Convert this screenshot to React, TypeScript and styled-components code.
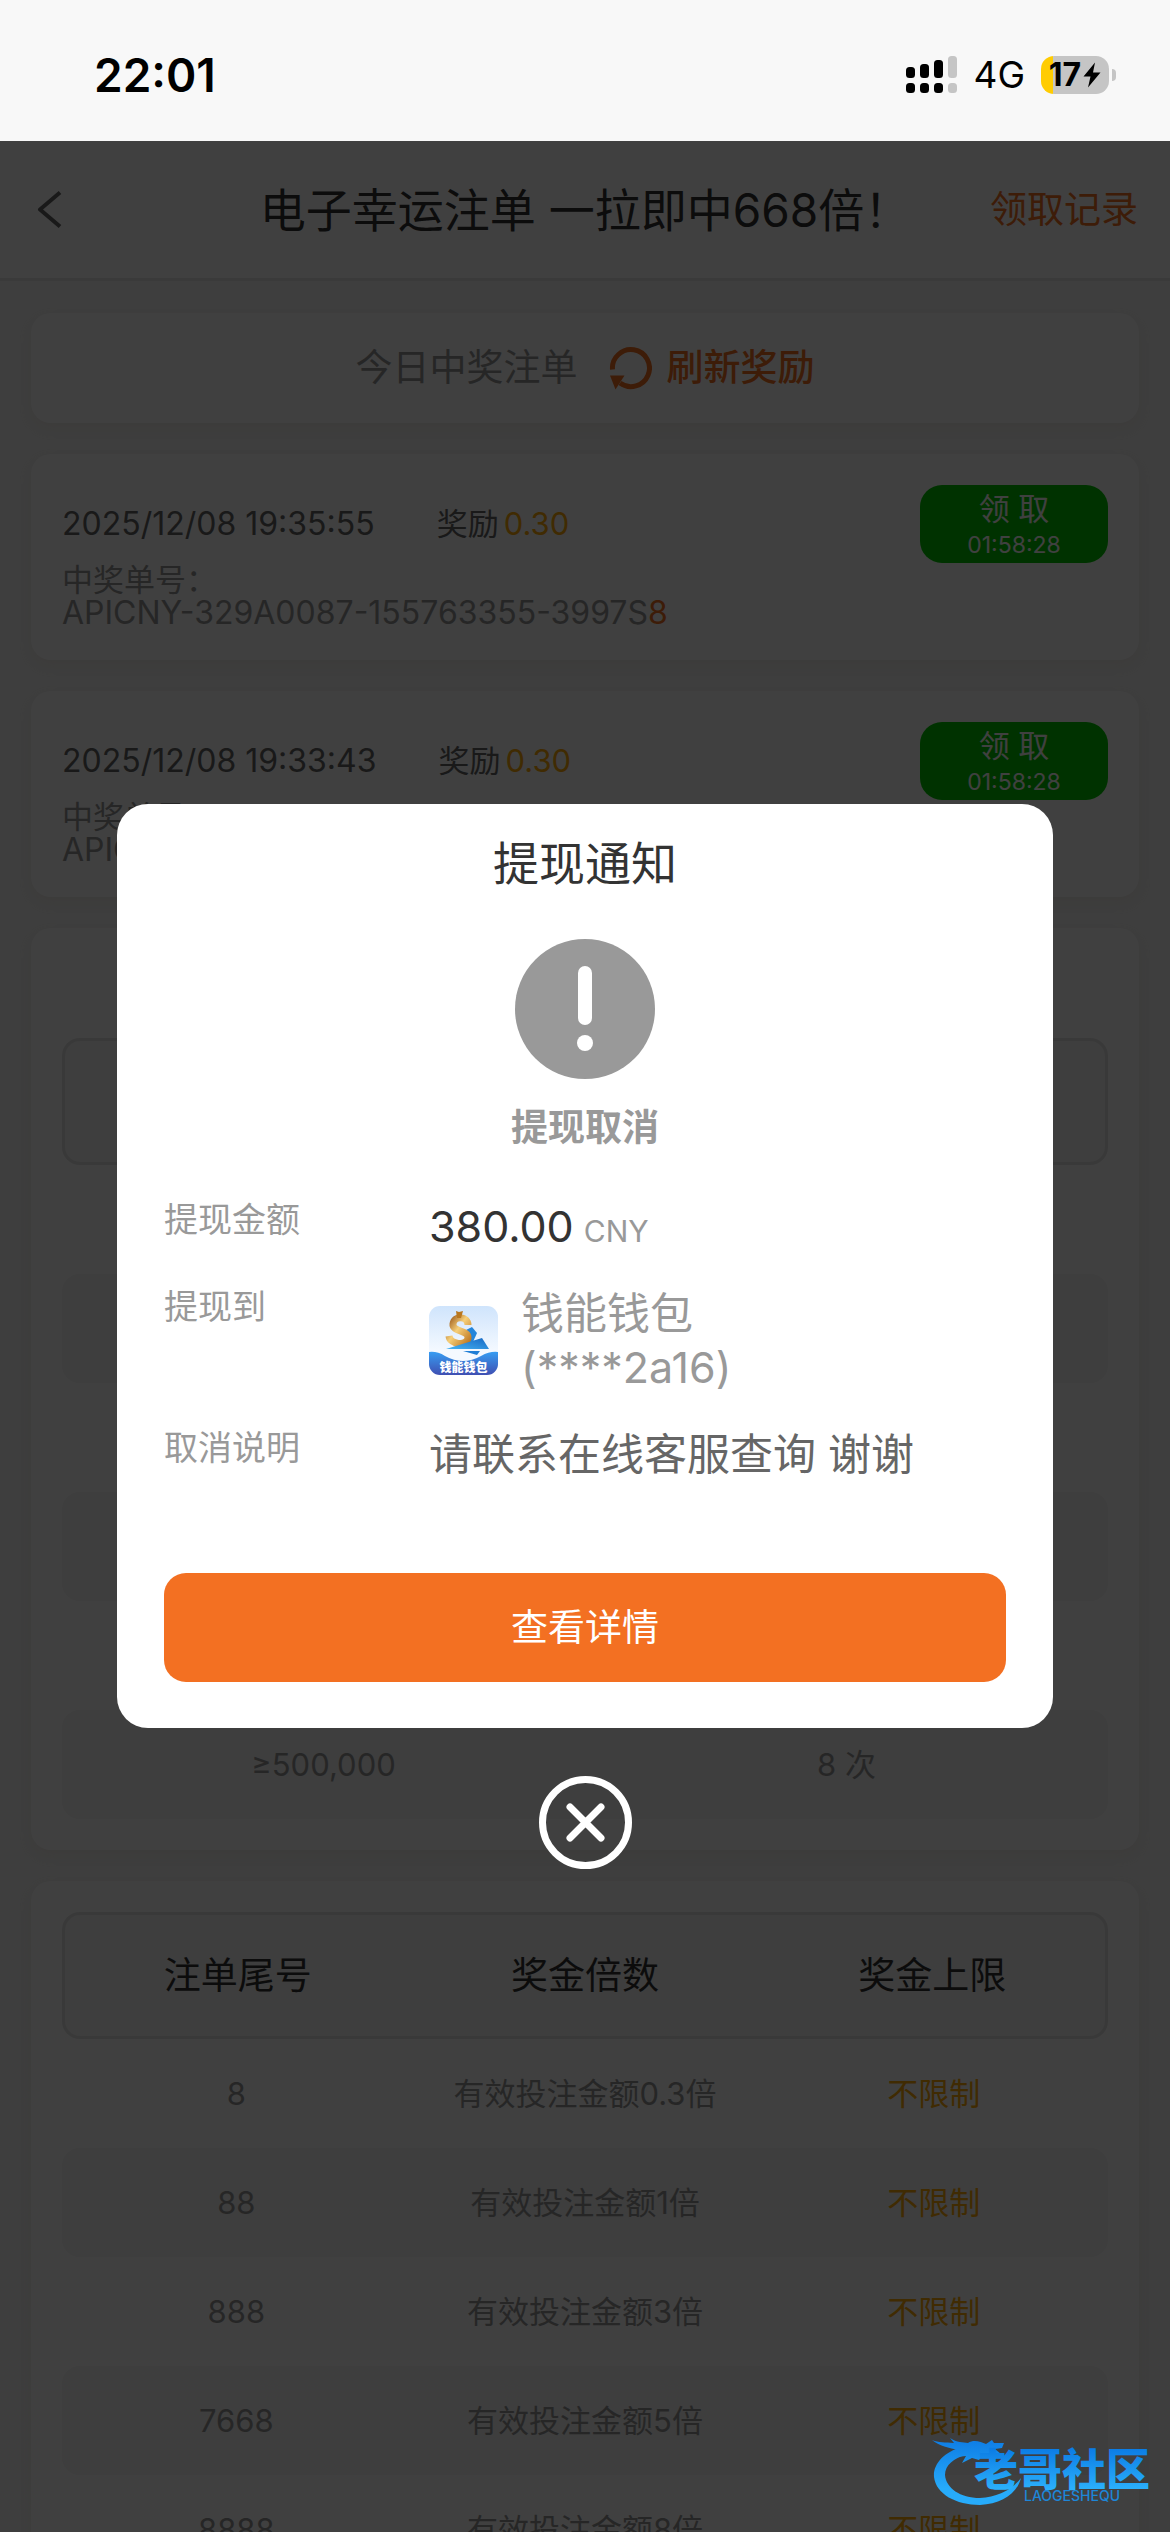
import React from "react";
import styled, { createGlobalStyle } from "styled-components";

const GlobalStyle = createGlobalStyle`
  *, *::before, *::after { box-sizing: border-box; }
  body {
    margin: 0;
    overflow: hidden;
    background: #f5f5f5;
    color: #333;
    font-family: Inter, "Noto Sans CJK SC", sans-serif;
  }
  button {
    margin: 0;
    padding: 0;
    border: 0;
    background: none;
    font: inherit;
    color: inherit;
    cursor: pointer;
  }
  svg { display: block; flex: none; }
`;

const Screen = styled.div`
  display: flex;
  flex-direction: column;
  height: 100vh;
  overflow: hidden;
`;

const StatusBar = styled.div`
  flex: none;
  display: flex;
  align-items: center;
  justify-content: space-between;
  height: 141px;
  padding: 8px 54px 0 94px;
  background: #f8f8f8;
  color: #000;
`;

const Clock = styled.time`
  font-size: 46px;
  line-height: 56px;
  font-weight: 600;
`;

const StatusIcons = styled.div`
  display: flex;
  align-items: center;
  gap: 16px;
`;

const Network = styled.span`
  font-size: 37px;
  line-height: 44px;
`;

const Battery = styled.div`
  display: flex;
  align-items: center;
  gap: 3px;
`;

const BatteryBody = styled.div`
  display: flex;
  align-items: center;
  justify-content: center;
  gap: 2px;
  width: 68px;
  height: 38px;
  border-radius: 13px;
  background: linear-gradient(90deg, #ffcc02 12px, #c5c5c5 12px);
  font-size: 32px;
  line-height: 38px;
  font-weight: 700;
`;

const BatteryTip = styled.div`
  width: 4px;
  height: 12px;
  border-radius: 0 6px 6px 0;
  background: #c5c5c5;
`;

const WebView = styled.div`
  flex: 1;
  min-height: 0;
  position: relative;
  overflow: hidden;
`;

const NavBar = styled.header`
  display: grid;
  grid-template-columns: 1fr auto 1fr;
  align-items: center;
  height: 140px;
  padding: 0 32px;
  border-bottom: 3px solid #e6e6e6;
  background: #fff;
`;

const PageTitle = styled.h1`
  margin: 0;
  font-size: 46px;
  line-height: 64px;
  font-weight: 400;
`;

const BackButton = styled.button`
  justify-self: start;
  padding: 0 5px;
`;

const HistoryLink = styled.a`
  justify-self: end;
  color: #f37022;
  font-size: 37px;
  line-height: 54px;
  text-decoration: none;
`;

const Content = styled.main`
  display: flex;
  flex-direction: column;
  gap: 31px;
  padding: 32px 31px;
`;

const Card = styled.section`
  padding: 31px;
  border-radius: 20px;
  background: #fff;
  box-shadow: 0 6px 12px rgba(214, 206, 176, 0.18);
`;

const TodayCard = styled(Card)`
  display: flex;
  align-items: center;
  justify-content: center;
  gap: 31px;
  height: 110px;
  font-size: 37px;
  line-height: 54px;
`;

const TodayLabel = styled.span`
  color: #999;
`;

const RefreshButton = styled.button`
  display: flex;
  align-items: center;
  gap: 15px;
  color: #f37022;
  font-weight: 500;
`;

const TierCard = styled(Card)`
  padding-top: 110px;
`;

const RecordTop = styled.div`
  display: flex;
  align-items: center;
  justify-content: space-between;
  color: #666;
  font-size: 31px;
  line-height: 44px;
`;

const RecordInfo = styled.div`
  display: flex;
  gap: 62px;
`;

const RecordTime = styled.time`
  font-size: 32px;
`;

const Reward = styled.span`
  display: flex;
  gap: 5px;
`;

const Amber = styled.span`
  color: #ffaa09;
`;

const ClaimButton = styled.button`
  display: flex;
  flex-direction: column;
  align-items: center;
  width: 188px;
  height: 78px;
  padding-top: 6px;
  border-radius: 22px;
  background: #00c800;
  color: #fff;
  font-size: 31px;
  line-height: 36px;
`;

const Countdown = styled.span`
  font-size: 23px;
`;

const TicketLabel = styled.div`
  color: #999;
  font-size: 31px;
  line-height: 33px;
`;

const TicketNumber = styled(TicketLabel)`
  font-size: 32px;
`;

const LuckyDigit = styled.span`
  color: #f37022;
`;

const Table = styled.table`
  width: 100%;
  table-layout: fixed;
  border-collapse: separate;
  border-spacing: 0;
  text-align: center;
`;

const HeadCell = styled.th`
  height: 127px;
  padding: 0;
  border: solid #e2e2e2;
  border-width: 3px 0;
  background: #f5f5f5;
  font-size: 37px;
  line-height: 54px;
  font-weight: 400;
  &:first-child {
    border-left-width: 3px;
    border-radius: 18px 0 0 18px;
  }
  &:last-child {
    border-right-width: 3px;
    border-radius: 0 18px 18px 0;
  }
`;

const BodyRow = styled.tr`
  &:nth-child(even) td {
    background: #f5f5f5;
  }
`;

const Cell = styled.td<{ $amber?: boolean }>`
  height: 109px;
  padding: 0;
  color: ${(p) => (p.$amber ? "#ffaa09" : "#999")};
  font-size: 31px;
  line-height: 44px;
  &:first-child { border-radius: 18px 0 0 18px; }
  &:last-child { border-radius: 0 18px 18px 0; }
`;

const Overlay = styled.div`
  position: absolute;
  inset: 0;
  display: flex;
  flex-direction: column;
  align-items: center;
  justify-content: center;
  gap: 48px;
  background: rgba(0, 0, 0, 0.75);
`;

const Dialog = styled.div`
  display: flex;
  flex-direction: column;
  align-items: center;
  width: 80%;
  padding: 27px 47px 46px;
  border-radius: 31px;
  background: #fff;
`;

const DialogTitle = styled.h2`
  margin: 0 0 44px;
  font-size: 46px;
  line-height: 64px;
  font-weight: 400;
`;

const StatusText = styled.p`
  margin: 22px 0 38px;
  color: #999;
  font-size: 37px;
  line-height: 54px;
  font-weight: 700;
`;

const Details = styled.dl`
  display: flex;
  flex-direction: column;
  gap: 21px;
  width: 100%;
  margin: 0 0 86px;
`;

const DetailRow = styled.div`
  display: grid;
  grid-template-columns: 265px 1fr;
`;

const DetailLabel = styled.dt`
  color: #999;
  font-size: 34px;
  line-height: 54px;
`;

const DetailValue = styled.dd<{ $color: string }>`
  display: flex;
  align-items: center;
  margin: 0;
  padding: 6px 0;
  color: ${(p) => p.$color};
  font-size: 43px;
  line-height: 54px;
`;

const AmountValue = styled(DetailValue)`
  align-items: baseline;
  gap: 10px;
`;

const Currency = styled.span`
  color: #999;
  font-size: 30px;
  line-height: 36px;
`;

const WalletValue = styled(DetailValue)`
  gap: 23px;
`;

const DetailsButton = styled.button`
  width: 100%;
  height: 109px;
  border-radius: 22px;
  background: #f37022;
  color: #fff;
  font-size: 37px;
  line-height: 54px;
`;

const Watermark = styled.div`
  position: absolute;
  right: 12px;
  bottom: 20px;
`;

const SignalIcon = () => (
  <svg width="51" height="37" viewBox="0 0 51 37" aria-hidden="true">
    {[11, 8, 4, 0].map((top, i) => (
      <g key={top} fill={i < 3 ? "#000" : "#c5c5c5"}>
        <rect x={i * 14} y={top} width="9" height={22 - top} rx="3.5" />
        <rect x={i * 14} y="27" width="9" height="10" rx="3.5" />
      </g>
    ))}
  </svg>
);

const BoltIcon = () => (
  <svg width="18" height="26" viewBox="0 0 18 26" aria-hidden="true">
    <path d="M12 0.5 L0.5 14.5 H7.5 L5 25.5 L17.5 10.5 H10 Z" fill="#000" />
  </svg>
);

const BackIcon = () => (
  <svg width="25" height="37" viewBox="0 0 25 37" aria-hidden="true">
    <path d="M23 1.5 L3 18.5 L23 35.5" fill="none" stroke="#666" strokeWidth="4" strokeLinejoin="round" />
  </svg>
);

const RefreshIcon = () => (
  <svg width="43" height="44" viewBox="0 0 43 44" aria-hidden="true">
    <path d="M3.5 23.5 A18.5 18.5 0 1 1 11 37" fill="none" stroke="#f37022" strokeWidth="5" />
    <path d="M1 29.5 H15.5 L6.5 43.5 Z" fill="#f37022" />
  </svg>
);

const AlertIcon = () => (
  <svg width="140" height="140" viewBox="0 0 140 140" aria-hidden="true">
    <circle cx="70" cy="70" r="70" fill="#999" />
    <rect x="63" y="27" width="14" height="59" rx="7" fill="#fff" />
    <circle cx="70" cy="104" r="8" fill="#fff" />
  </svg>
);

const WalletLogo = () => (
  <svg width="69" height="69" viewBox="0 0 69 69" aria-hidden="true">
    <defs>
      <linearGradient id="walletSky" x1="0" y1="0" x2="0" y2="1">
        <stop offset="0" stopColor="#cfe4fc" />
        <stop offset="0.65" stopColor="#f4f9ff" />
      </linearGradient>
      <linearGradient id="walletBase" x1="0" y1="0" x2="0" y2="1">
        <stop offset="0" stopColor="#379df2" />
        <stop offset="1" stopColor="#3f4fb2" />
      </linearGradient>
      <linearGradient id="walletGold" x1="0" y1="0" x2="1" y2="1">
        <stop offset="0" stopColor="#9c5a1c" />
        <stop offset="0.45" stopColor="#f6cf79" />
        <stop offset="1" stopColor="#c07a24" />
      </linearGradient>
      <linearGradient id="walletPlane" x1="0" y1="1" x2="1" y2="0">
        <stop offset="0" stopColor="#45b4f3" />
        <stop offset="1" stopColor="#1768c4" />
      </linearGradient>
      <clipPath id="walletClip">
        <rect width="69" height="69" rx="11" />
      </clipPath>
    </defs>
    <g clipPath="url(#walletClip)">
      <rect width="69" height="69" fill="url(#walletSky)" />
      <path d="M37 24 L43 21 L48 27 L44 36 L36 37 Z" fill="#2385da" />
      <path
        d="M39 19 C39 10 25 9 24 18 C23 26 40 24 39 32 C38 40 21 39 20 30"
        fill="none"
        stroke="url(#walletGold)"
        strokeWidth="7"
      />
      <path d="M27 5 L30 6 L34 5 L32 12 H28 Z" fill="#b9771f" />
      <path d="M17 43 L53 32 L60 43 Z" fill="url(#walletPlane)" />
      <path d="M34 45 H51 L48 49 Z" fill="#1f7ed6" />
      <path d="M0 46 Q8 45 16 50 Q34 60 52 50 Q61 45 69 46 V69 H0 Z" fill="url(#walletBase)" />
      <text
        x="34.5"
        y="66"
        textAnchor="middle"
        fontFamily="Noto Sans CJK SC, sans-serif"
        fontSize="12"
        fontWeight="900"
        fill="#fff"
      >
        钱能钱包
      </text>
    </g>
  </svg>
);

const CloseIcon = () => (
  <svg width="93" height="93" viewBox="0 0 93 93" aria-hidden="true">
    <g fill="none" stroke="#fff" strokeWidth="7" strokeLinecap="round">
      <circle cx="46.5" cy="46.5" r="43" />
      <path d="M31 31 L62 62 M62 31 L31 62" />
    </g>
  </svg>
);

const CommunityLogo = () => (
  <svg width="226" height="78" viewBox="0 0 226 78" role="img" aria-label="老哥社区">
    <defs>
      <linearGradient id="brandBlue" x1="0" y1="0" x2="0" y2="78" gradientUnits="userSpaceOnUse">
        <stop offset="0.1" stopColor="#0f7fe6" />
        <stop offset="0.7" stopColor="#27abfa" />
      </linearGradient>
      <linearGradient id="brandText" x1="0" y1="0" x2="0" y2="1">
        <stop offset="0.2" stopColor="#0b7be4" />
        <stop offset="0.85" stopColor="#2bb0fb" />
      </linearGradient>
    </defs>
    <g fill="url(#brandBlue)">
      <path d="M30 13 C12 18 1 30 2 43 C4 60 24 71 48 71 C69 70 85 60 89 44 C79 57 65 63 48 64 C28 64 14 54 13 41 C13 31 22 24 34 21 Z" />
      <path d="M0 6 C7 9 13 8 22 9 L18 4 C25 9 31 8 36 9 C42 5 49 8 54 10 L60 6 L62 9 L72 9 L70 14 L63 15 L69 20 L66 24 L58 20 L60 24 L50 22 L47 26 L40 24 L30 29 L34 22 L24 23 L27 16 C17 14 7 12 0 6 Z" />
    </g>
    <text
      x="130"
      y="52"
      textAnchor="middle"
      fontFamily="Noto Sans CJK SC, sans-serif"
      fontSize="44"
      fontWeight="900"
      fill="url(#brandText)"
    >
      老哥社区
    </text>
    <text x="92" y="67" fontFamily="Inter, sans-serif" fontSize="14" fontWeight="500" fill="#1d86d8">
      LAOGESHEQU
    </text>
  </svg>
);

const records = [
  { time: "2025/12/08 19:35:55", reward: "0.30", ticket: "APICNY-329A0087-155763355-3997S", digit: "8", left: "01:58:28" },
  { time: "2025/12/08 19:33:43", reward: "0.30", ticket: "APICNY-329A0087-155763355-3997S", digit: "8", left: "01:58:28" },
];

const tiers = [
  ["", ""],
  ["", ""],
  ["", ""],
  ["", ""],
  ["", ""],
  ["≥500,000", "8 次"],
];

const prizes = [
  ["8", "有效投注金额0.3倍", "不限制"],
  ["88", "有效投注金额1倍", "不限制"],
  ["888", "有效投注金额3倍", "不限制"],
  ["7668", "有效投注金额5倍", "不限制"],
  ["8888", "有效投注金额8倍", "不限制"],
];

export default function App() {
  return (
    <Screen>
      <GlobalStyle />
      <StatusBar>
        <Clock>22:01</Clock>
        <StatusIcons>
          <SignalIcon />
          <Network>4G</Network>
          <Battery>
            <BatteryBody>
              17
              <BoltIcon />
            </BatteryBody>
            <BatteryTip />
          </Battery>
        </StatusIcons>
      </StatusBar>

      <WebView>
        <NavBar>
          <BackButton aria-label="返回">
            <BackIcon />
          </BackButton>
          <PageTitle>电子幸运注单 一拉即中668倍！</PageTitle>
          <HistoryLink href="#records">领取记录</HistoryLink>
        </NavBar>

        <Content>
          <TodayCard>
            <TodayLabel>今日中奖注单</TodayLabel>
            <RefreshButton>
              <RefreshIcon />
              刷新奖励
            </RefreshButton>
          </TodayCard>

          {records.map((r) => (
            <Card key={r.time}>
              <RecordTop>
                <RecordInfo>
                  <RecordTime>{r.time}</RecordTime>
                  <Reward>
                    奖励<Amber>{r.reward}</Amber>
                  </Reward>
                </RecordInfo>
                <ClaimButton>
                  领 取<Countdown>{r.left}</Countdown>
                </ClaimButton>
              </RecordTop>
              <TicketLabel>中奖单号：</TicketLabel>
              <TicketNumber>
                {r.ticket}
                <LuckyDigit>{r.digit}</LuckyDigit>
              </TicketNumber>
            </Card>
          ))}

          <TierCard>
            <Table>
              <thead>
                <tr>
                  <HeadCell />
                  <HeadCell />
                </tr>
              </thead>
              <tbody>
                {tiers.map(([bet, times], i) => (
                  <BodyRow key={i}>
                    <Cell>{bet}</Cell>
                    <Cell>{times}</Cell>
                  </BodyRow>
                ))}
              </tbody>
            </Table>
          </TierCard>

          <Card>
            <Table>
              <thead>
                <tr>
                  <HeadCell>注单尾号</HeadCell>
                  <HeadCell>奖金倍数</HeadCell>
                  <HeadCell>奖金上限</HeadCell>
                </tr>
              </thead>
              <tbody>
                {prizes.map(([tail, multiple, limit]) => (
                  <BodyRow key={tail}>
                    <Cell>{tail}</Cell>
                    <Cell>{multiple}</Cell>
                    <Cell $amber>{limit}</Cell>
                  </BodyRow>
                ))}
              </tbody>
            </Table>
          </Card>
        </Content>

        <Overlay>
          <Dialog role="dialog" aria-modal="true" aria-labelledby="dialog-title">
            <DialogTitle id="dialog-title">提现通知</DialogTitle>
            <AlertIcon />
            <StatusText>提现取消</StatusText>
            <Details>
              <DetailRow>
                <DetailLabel>提现金额</DetailLabel>
                <AmountValue $color="#333">
                  380.00<Currency>CNY</Currency>
                </AmountValue>
              </DetailRow>
              <DetailRow>
                <DetailLabel>提现到</DetailLabel>
                <WalletValue $color="#999">
                  <WalletLogo />
                  <span>
                    钱能钱包
                    <br />
                    (****2a16)
                  </span>
                </WalletValue>
              </DetailRow>
              <DetailRow>
                <DetailLabel>取消说明</DetailLabel>
                <DetailValue $color="#666">请联系在线客服查询 谢谢</DetailValue>
              </DetailRow>
            </Details>
            <DetailsButton>查看详情</DetailsButton>
          </Dialog>
          <button aria-label="关闭">
            <CloseIcon />
          </button>
        </Overlay>

        <Watermark>
          <CommunityLogo />
        </Watermark>
      </WebView>
    </Screen>
  );
}
